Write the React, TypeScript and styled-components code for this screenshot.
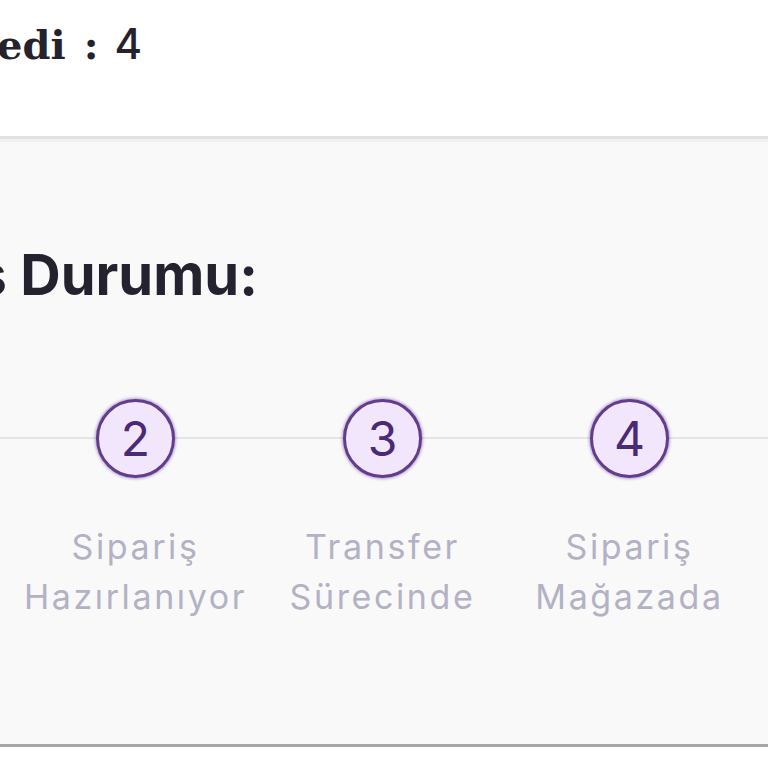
import { FC } from "react";
import styled, { createGlobalStyle } from "styled-components";

const GlobalStyle = createGlobalStyle`
  html, body {
    margin: 0;
    padding: 0;
    background: #ffffff;
  }
  body {
    font-family: Inter, "Noto Sans", sans-serif;
  }
`;

const Viewport = styled.div`
  width: 768px;
  height: 768px;
  overflow: hidden;
  background: #ffffff;
`;

const Shifted = styled.div`
  margin-left: -235px;
  width: 1235px;
`;

const SummaryRow = styled.div`
  height: 136px;
  padding-left: 45px;
  padding-top: 18px;
  box-sizing: border-box;
  display: flex;
  align-items: baseline;
  gap: 18px;
  color: #24232d;
`;

const SummaryLabel = styled.span`
  font-family: "DejaVu Serif", serif;
  font-weight: 700;
  font-size: 40px;
`;

const Colon = styled.span`
  font-family: "DejaVu Serif", serif;
  font-weight: 700;
  font-size: 40px;
`;

const Count = styled.span`
  font-family: Inter, "Noto Sans", sans-serif;
  font-weight: 500;
  font-size: 42px;
  margin-left: -2px;
`;

const StatusPanel = styled.section`
  background: #f9f9fa;
  border-top: 3px solid #e1e1e1;
  border-bottom: 3px solid #a7a7a7;
  box-shadow: inset 0 3px 0 #f0f0f0;
  height: 611px;
  box-sizing: border-box;
`;

const PanelTitle = styled.h2`
  margin: 0;
  padding: 102px 0 0 52px;
  font-family: Inter, sans-serif;
  font-weight: 700;
  font-size: 56px;
  line-height: 68px;
  color: #24222f;
`;

const Steps = styled.ol`
  list-style: none;
  margin: 0;
  padding: 0;
  margin-top: 90px;
  display: grid;
  grid-template-columns: repeat(5, 247px);
  background: linear-gradient(#e4e4e6, #e4e4e6) no-repeat 0 38px / 100% 2px;
`;

const Step = styled.li`
  display: flex;
  flex-direction: column;
  align-items: center;
`;

const StepCircle = styled.div`
  width: 79px;
  height: 79px;
  box-sizing: border-box;
  border-radius: 50%;
  border: 3.5px solid #633c8e;
  box-shadow: 0 0 3px 1px rgba(109, 71, 151, 0.5);
  background: #f2e6fd;
  display: flex;
  align-items: center;
  justify-content: center;
  font-family: Inter, sans-serif;
  font-weight: 400;
  font-size: 48px;
  color: #4a2a77;
`;

const StepLabel = styled.div`
  margin-top: 44px;
  text-align: center;
  font-family: Inter, sans-serif;
  font-size: 34px;
  line-height: 50px;
  letter-spacing: 2.6px;
  color: #b3b1c4;
`;

const steps = [
  { n: 1, label: ["Sipariş", "Alındı"] },
  { n: 2, label: ["Sipariş", "Hazırlanıyor"] },
  { n: 3, label: ["Transfer", "Sürecinde"] },
  { n: 4, label: ["Sipariş", "Mağazada"] },
  { n: 5, label: ["Teslim", "Edildi"] },
];

const App: FC = () => {
  return (
    <>
      <GlobalStyle />
      <Viewport>
        <Shifted>
          <SummaryRow>
            <SummaryLabel>Ürün Adedi</SummaryLabel>
            <Colon>:</Colon>
            <Count>4</Count>
          </SummaryRow>
          <StatusPanel>
            <PanelTitle>Sipariş Durumu:</PanelTitle>
            <Steps>
              {steps.map((s) => (
                <Step key={s.n}>
                  <StepCircle>{s.n}</StepCircle>
                  <StepLabel>
                    {s.label[0]}
                    <br />
                    {s.label[1]}
                  </StepLabel>
                </Step>
              ))}
            </Steps>
          </StatusPanel>
        </Shifted>
      </Viewport>
    </>
  );
};

export default App;
